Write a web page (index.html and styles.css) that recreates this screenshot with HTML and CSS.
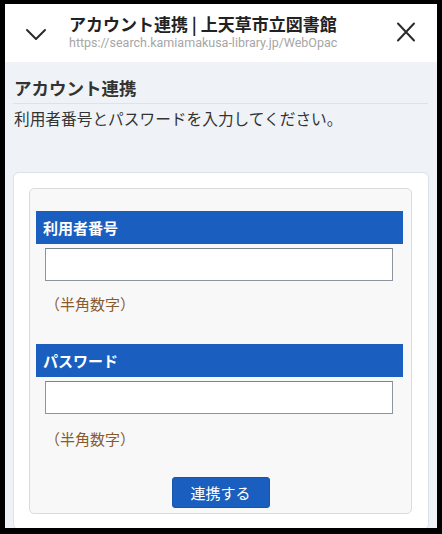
FILE: index.html
```html
<!DOCTYPE html>
<html lang="ja">
<head>
<meta charset="utf-8">
<title>アカウント連携</title>
<link rel="stylesheet" href="styles.css">
</head>
<body>
<div class="frame">
  <header class="topbar">
    <svg class="icon chevron" width="24" height="24" viewBox="0 0 24 24" aria-hidden="true">
      <path d="M3 8 L12 17 L21 8" fill="none" stroke="#2b2b2b" stroke-width="2" stroke-linecap="round" stroke-linejoin="round"/>
    </svg>
    <div class="titles">
      <div class="title">アカウント連携 | 上天草市立図書館</div>
      <div class="url">https://search.kamiamakusa-library.jp/WebOpac</div>
    </div>
    <svg class="icon close" width="24" height="24" viewBox="0 0 24 24" aria-hidden="true">
      <path d="M4 3.5 L20 20.5 M20 3.5 L4 20.5" fill="none" stroke="#2b2b2b" stroke-width="2" stroke-linecap="round"/>
    </svg>
  </header>
  <main class="content">
    <h1 class="heading">アカウント連携</h1>
    <p class="lead">利用者番号とパスワードを入力してください。</p>
    <section class="card">
      <form class="panel">
        <div class="bar">利用者番号</div>
        <input class="field" type="text">
        <div class="hint">（半角数字）</div>
        <div class="bar bar-second">パスワード</div>
        <input class="field" type="password">
        <div class="hint hint-second">（半角数字）</div>
        <div class="actions">
          <button class="btn" type="button">連携する</button>
        </div>
      </form>
    </section>
  </main>
</div>
</body>
</html>
```

FILE: styles.css
```css
* { box-sizing: border-box; }
html, body {
  margin: 0;
  padding: 0;
  background: #000;
}
body {
  font-family: "Noto Sans CJK JP", "Noto Sans", sans-serif;
  color: #333;
}
.frame {
  margin: 4px 5px 0 5px;
  height: 524px;
  overflow: hidden;
  background: #eff3f7;
}
.topbar {
  height: 58px;
  background: #fff;
  display: flex;
  align-items: center;
  padding: 0 19px 0 19px;
}
.icon { flex: none; display: block; }
.chevron { margin-top: 2px; }
.close { margin-top: -2px; }
.titles {
  flex: 1;
  margin-left: 21px;
  margin-top: -4px;
}
.title {
  font-size: 17px;
  line-height: 22px;
  font-weight: 700;
  color: #222;
  white-space: nowrap;
}
.url {
  font-family: Roboto, "Noto Sans", sans-serif;
  font-size: 12.5px;
  line-height: 15px;
  color: #a6a6a6;
  white-space: nowrap;
}
.content {
  padding: 14px 8px 0 8px;
}
.heading {
  margin: 0;
  padding: 0 0 3px 1px;
  font-size: 17.5px;
  line-height: 24px;
  font-weight: 700;
  color: #333;
  border-bottom: 1px solid #dde2e8;
  margin-right: 1px;
}
.lead {
  margin: 4px 0 0 1px;
  font-size: 15.7px;
  line-height: 22px;
  color: #333;
}
.card {
  margin-top: 42px;
  background: #fff;
  border: 1px solid #dbe1e8;
  border-radius: 6px;
  padding: 15px 16px 15px 15px;
}
.panel {
  margin: 0;
  background: #f8f8f8;
  border: 1px solid #d9dcdf;
  border-radius: 5px;
  padding: 22px 8px 5px 6px;
}
.bar {
  height: 33px;
  background: #1a5fc0;
  color: #fff;
  font-size: 15px;
  font-weight: 700;
  line-height: 33px;
  padding-left: 7px;
}
.bar-second { margin-top: 29px; }
.field {
  display: block;
  width: calc(100% - 19px);
  height: 33px;
  margin: 4px 10px 0 9px;
  border: 1px solid #8e949c;
  border-top-color: #7d838b;
  background: #fff;
  border-radius: 0;
  padding: 0 6px;
  font-size: 15px;
  outline: none;
}
.hint {
  margin: 12px 0 0 9px;
  font-size: 15px;
  line-height: 22px;
  color: #8b5a2b;
}
.hint-second { margin-top: 14px; }
.actions {
  display: flex;
  justify-content: center;
  margin-top: 27px;
  padding-left: 2px;
}
.btn {
  width: 98px;
  height: 31px;
  background: #1a5fc0;
  border: 1px solid #1754ab;
  border-radius: 3px;
  color: #fff;
  font-family: "Noto Sans CJK JP", "Noto Sans", sans-serif;
  font-size: 15px;
  line-height: 29px;
  padding: 0;
}
```
